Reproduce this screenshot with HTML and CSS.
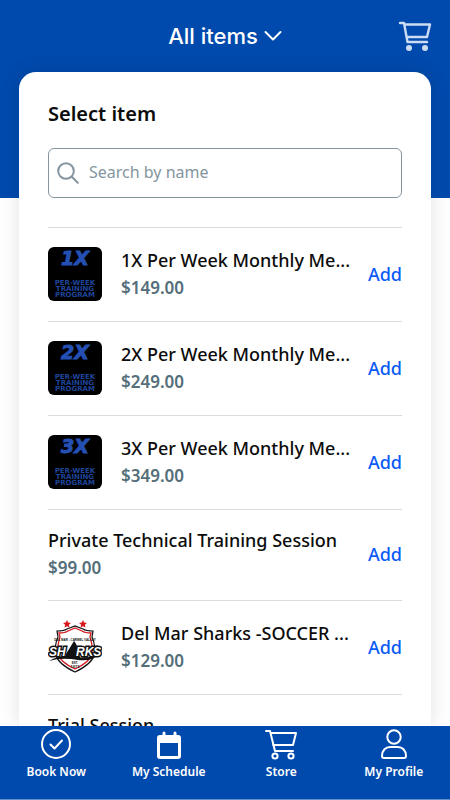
FILE: index.html
```html
<!DOCTYPE html>
<html lang="en">
<head>
<meta charset="utf-8">
<meta name="viewport" content="width=device-width, initial-scale=1">
<title>Store</title>
<link rel="stylesheet" href="styles.css">
</head>
<body>
<div class="app">
  <header class="topbar">
    <button class="filter" type="button">All items
      <svg width="18" height="12" viewBox="0 0 18 12" aria-hidden="true"><path d="M1.5 2 9 9.5 16.5 2" fill="none" stroke="currentColor" stroke-width="2" stroke-linecap="round" stroke-linejoin="round"/></svg>
    </button>
    <button class="cart" type="button" aria-label="Cart">
      <svg width="34" height="32" viewBox="0 0 34 32" aria-hidden="true"><g fill="none" stroke="currentColor" stroke-width="2.4" stroke-linecap="round" stroke-linejoin="round"><path d="M2 3h4l3.5 19H29M6.5 4.5H32L29 17H9"/></g><g fill="currentColor"><circle cx="11" cy="28" r="3"/><circle cx="27" cy="28" r="3"/></g></svg>
    </button>
  </header>
  <main class="card">
    <h1 class="heading">Select item</h1>
    <label class="search">
      <svg width="22" height="22" viewBox="0 0 22 22" aria-hidden="true"><g fill="none" stroke="currentColor" stroke-width="2" stroke-linecap="round"><circle cx="9" cy="9" r="7.8"/><path d="m14.8 14.8 6 6"/></g></svg>
      <input type="search" placeholder="Search by name" aria-label="Search by name">
    </label>
    <ul class="items">
      <li class="item">
        <svg class="thumb" viewBox="0 0 54 54" aria-hidden="true"><rect width="54" height="54" rx="6"/><text class="count" x="27" y="18">1X</text><g class="plan"><text x="27" y="38">PER-WEEK</text><text x="27" y="44">TRAINING</text><text x="27" y="50">PROGRAM</text></g></svg>
        <div class="info"><h2 class="name">1X Per Week Monthly Me...</h2><p class="price">$149.00</p></div>
        <button class="add" type="button">Add</button>
      </li>
      <li class="item">
        <svg class="thumb" viewBox="0 0 54 54" aria-hidden="true"><rect width="54" height="54" rx="6"/><text class="count" x="27" y="18">2X</text><g class="plan"><text x="27" y="38">PER-WEEK</text><text x="27" y="44">TRAINING</text><text x="27" y="50">PROGRAM</text></g></svg>
        <div class="info"><h2 class="name">2X Per Week Monthly Me...</h2><p class="price">$249.00</p></div>
        <button class="add" type="button">Add</button>
      </li>
      <li class="item">
        <svg class="thumb" viewBox="0 0 54 54" aria-hidden="true"><rect width="54" height="54" rx="6"/><text class="count" x="27" y="18">3X</text><g class="plan"><text x="27" y="38">PER-WEEK</text><text x="27" y="44">TRAINING</text><text x="27" y="50">PROGRAM</text></g></svg>
        <div class="info"><h2 class="name">3X Per Week Monthly Me...</h2><p class="price">$349.00</p></div>
        <button class="add" type="button">Add</button>
      </li>
      <li class="item">
        <div class="info"><h2 class="name">Private Technical Training Session</h2><p class="price">$99.00</p></div>
        <button class="add" type="button">Add</button>
      </li>
      <li class="item">
        <svg class="thumb" viewBox="0 0 54 54" aria-hidden="true">
          <path d="M9 11q7 0 10-2l8-3 8 3q3 2 10 2l-1 6q4 9 2 18-2 9-19 17Q10 44 8 35q-2-9 2-18z" fill="#fff" stroke="#111" stroke-width="1.2"/>
          <path d="M11 13q6 0 9-2l7-3 7 3q3 2 9 2l-1 4q3 9 2 17-2 8-17 15Q12 42 10 34q-1-8 2-17z" fill="none" stroke="#d71920" stroke-width="1.3"/>
          <g fill="#d71920"><path d="m19 0 1.2 2.6 2.8.3-2.1 1.9.6 2.8L19 6.2l-2.5 1.4.6-2.8L15 2.9l2.8-.3zM35 0l1.2 2.6 2.8.3-2.1 1.9.6 2.800L35 6.200l-2.500 1.400.6-2.800L31 2.900l2.800-.3z"/></g>
          <path d="M1 41q12-7 27-4 12 2 25-4-9 9-23 7-16-3-29 1" fill="#111"/>
          <path d="m18 34 8-13q4 4 4 12l3 6-15-1z" fill="#111"/>
          <text class="club" x="27" y="21">DEL MAR - CARMEL VALLEY</text>
          <text class="mascot" x="1" y="36">SH</text><text class="mascot" x="28" y="36">RKS</text>
          <text class="club" x="27" y="44">EST.</text><text class="year" x="27" y="48">1972</text>
        </svg>
        <div class="info"><h2 class="name">Del Mar Sharks -SOCCER ...</h2><p class="price">$129.00</p></div>
        <button class="add" type="button">Add</button>
      </li>
      <li class="item">
        <div class="info"><h2 class="name">Trial Session</h2></div>
      </li>
    </ul>
  </main>
  <nav class="tabs">
    <a class="tab" href="#book"><svg width="36" height="32" viewBox="0 0 36 32" aria-hidden="true"><g fill="none" stroke="currentColor" stroke-width="2" stroke-linecap="round" stroke-linejoin="round"><circle cx="18" cy="16" r="14"/><path d="m12.5 16.5 4 4 7.5-8"/></g></svg>Book Now</a>
    <a class="tab" href="#schedule"><svg width="36" height="32" viewBox="0 0 36 32" aria-hidden="true"><path d="M9 7h18q3 0 3 3v18q0 3-3 3H9q-3 0-3-3V10q0-3 3-3zm0 8v13h18V15z" fill="currentColor" fill-rule="evenodd"/><path d="M13 5v3M24 5v3" stroke="currentColor" stroke-width="3" stroke-linecap="round"/></svg>My Schedule</a>
    <a class="tab" href="#store"><svg width="36" height="32" viewBox="0 0 36 32" aria-hidden="true"><g fill="none" stroke="currentColor" stroke-width="2" stroke-linecap="round" stroke-linejoin="round"><path d="M3 3h4l5 20h18M8 5h25l-3 12H10"/><circle cx="12" cy="28" r="2.6"/><circle cx="28" cy="28" r="2.6"/></g></svg>Store</a>
    <a class="tab" href="#profile"><svg width="36" height="32" viewBox="0 0 36 32" aria-hidden="true"><g fill="none" stroke="currentColor" stroke-width="2" stroke-linejoin="round"><circle cx="18" cy="9" r="6.7"/><path d="M8 30h20q2 0 2-2c0-6-4-9-8-9h-8c-4 0-8 3-8 9q0 2 2 2z"/></g></svg>My Profile</a>
  </nav>
</div>
</body>
</html>
```
FILE: styles.css
```css
* { box-sizing: border-box; }

body {
  margin: 0;
  font-family: "Noto Sans", "Open Sans", sans-serif;
  color: #0c0c0c;
}

button {
  padding: 0;
  border: 0;
  background: none;
  font: inherit;
  cursor: pointer;
}

svg { display: block; flex: none; }

.app {
  display: flex;
  flex-direction: column;
  height: 100vh;
  background: linear-gradient(#004aad 198px, #fff 198px);
}

.topbar {
  display: grid;
  grid-template-columns: 1fr auto 1fr;
  align-items: center;
  flex: none;
  height: 72px;
  padding: 0 18px;
  color: #fff;
}

.filter {
  grid-column: 2;
  display: flex;
  align-items: center;
  gap: 6px;
  color: #fff;
  font: 500 22px/28px Inter, sans-serif;
}

.cart { justify-self: end; color: #ccdcf2; }

.card {
  flex: 1;
  min-height: 0;
  overflow: hidden;
  margin: 0 19px;
  padding: 28px 29px 0;
  border-radius: 17px 17px 0 0;
  background: #fff;
  box-shadow: 0 0 20px rgba(0, 0, 0, 0.12);
}

.heading {
  margin: 0 0 20px;
  font-size: 20px;
  line-height: 28px;
  font-weight: 600;
}

.search {
  display: flex;
  align-items: center;
  gap: 10px;
  height: 50px;
  margin-bottom: 29px;
  padding: 0 8px;
  border: 1px solid #84959f;
  border-radius: 6px;
  color: #84959f;
}

.search input {
  flex: 1;
  min-width: 0;
  padding: 0 0 2px;
  border: 0;
  outline: 0;
  background: none;
  font: 400 16px/24px "Noto Sans", sans-serif;
  color: #0c0c0c;
}

.search input::placeholder { color: #84959f; opacity: 1; }

.items { margin: 0; padding: 0; list-style: none; }

.item {
  display: flex;
  align-items: center;
  padding: 17px 0 18px;
  border-top: 1px solid #d9dcde;
}

.thumb {
  width: 54px;
  height: 54px;
  margin: 2px 19px 2px 0;
}

.count, .plan {
  fill: #2450b4;
  font-family: "DejaVu Sans", sans-serif;
  font-weight: 700;
  text-anchor: middle;
}

.count { font-size: 19px; font-style: italic; stroke: #2450b4; stroke-width: 1px; }
.plan { font-size: 7px; opacity: 0.85; }

.club, .year {
  fill: #111;
  font: 700 3px "Liberation Sans", sans-serif;
  text-anchor: middle;
}

.year { font-size: 4px; }

.mascot {
  fill: #fff;
  stroke: #111;
  stroke-width: 3px;
  paint-order: stroke;
  font: italic 700 12px "Liberation Sans", sans-serif;
}

.info { flex: 1; min-width: 0; padding-bottom: 1px; }

.name, .price {
  margin: 0;
  line-height: 27px;
  font-weight: 500;
  white-space: nowrap;
}

.name { font-size: 18px; }
.price { color: #546e7a; font-size: 17px; font-weight: 600; }

.add {
  margin-left: 8px;
  color: #0a5af5;
  font-size: 18px;
  line-height: 27px;
  font-weight: 500;
}

.tabs {
  position: relative;
  display: grid;
  grid-template-columns: repeat(4, 1fr);
  flex: none;
  height: 74px;
  padding-top: 2px;
  background: #004aad;
  border-bottom: 1px solid #5f8fcd;
}

.tab {
  display: flex;
  flex-direction: column;
  align-items: center;
  gap: 3px;
  color: #fff;
  font-size: 12px;
  line-height: 18px;
  font-weight: 600;
  text-decoration: none;
}
```
